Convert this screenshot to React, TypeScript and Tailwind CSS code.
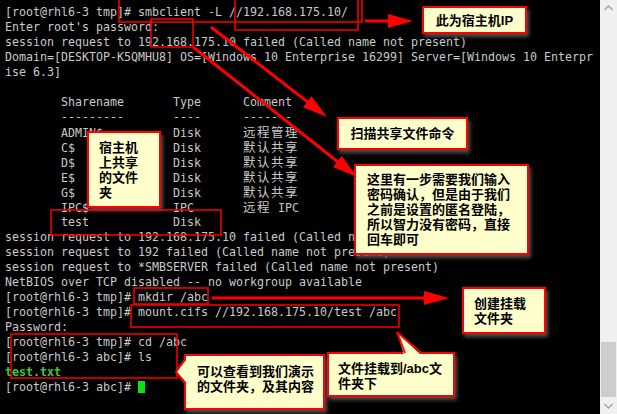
import React from "react";

const mono = { fontFamily: '"DejaVu Sans Mono", "Noto Sans CJK SC", monospace' };

function Cjk({ children }: { children: React.ReactNode }) {
  return <span className="text-[12.5px] tracking-[1.5px]">{children}</span>;
}

const lines: React.ReactNode[] = [
  "[root@rhl6-3 tmp]# smbclient -L //192.168.175.10/",
  "Enter root's password:",
  "session request to 192.168.175.10 failed (Called name not present)",
  "Domain=[DESKTOP-K5QMHU8] OS=[Windows 10 Enterprise 16299] Server=[Windows 10 Enterpr",
  "ise 6.3]",
  "",
  "        Sharename       Type      Comment",
  "        ---------       ----      -------",
  <>{"        ADMIN$          Disk      "}<Cjk>远程管理</Cjk></>,
  <>{"        C$              Disk      "}<Cjk>默认共享</Cjk></>,
  <>{"        D$              Disk      "}<Cjk>默认共享</Cjk></>,
  <>{"        E$              Disk      "}<Cjk>默认共享</Cjk></>,
  <>{"        G$              Disk      "}<Cjk>默认共享</Cjk></>,
  <>{"        IPC$            IPC       "}<Cjk>远程</Cjk>{" IPC"}</>,
  "        test            Disk",
  "session request to 192.168.175.10 failed (Called name not present)",
  "session request to 192 failed (Called name not present)",
  "session request to *SMBSERVER failed (Called name not present)",
  "NetBIOS over TCP disabled -- no workgroup available",
  "[root@rhl6-3 tmp]# mkdir /abc",
  "[root@rhl6-3 tmp]# mount.cifs //192.168.175.10/test /abc",
  "Password:",
  "[root@rhl6-3 tmp]# cd /abc",
  "[root@rhl6-3 abc]# ls",
  <span className="font-bold text-[#3ec43e]">test.txt</span>,
  <>
    {"[root@rhl6-3 abc]# "}
    <span className="inline-block w-[7px] h-[12px] bg-[#10e010] align-[-2px]" />
  </>,
];

// red boxes drawn on the screenshot
const boxes = [
  { x: 119, y: -1, w: 243, h: 23 },
  { x: 235, y: -1, w: 123, h: 31 },
  { x: 151, y: 19, w: 42, h: 28 },
  { x: 51, y: 210, w: 170, h: 25 },
  { x: 134, y: 288, w: 74, h: 16 },
  { x: 131, y: 305, w: 268, h: 22 },
  { x: 11, y: 334, w: 166, h: 44 },
];

const arrows = [
  [365, 21, 413, 21],
  [211, 27, 327, 117],
  [193, 47, 357, 177],
  [212, 298, 449, 298],
];

function Arrow({ a }: { a: number[] }) {
  const [x1, y1, x2, y2] = a;
  const dx = x2 - x1;
  const dy = y2 - y1;
  const len = Math.hypot(dx, dy);
  const ux = dx / len;
  const uy = dy / len;
  const hl = 25;
  const hw = 7;
  const bx = x2 - ux * hl;
  const by = y2 - uy * hl;
  const pts = `${x2},${y2} ${bx - uy * hw},${by + ux * hw} ${bx + uy * hw},${by - ux * hw}`;
  return (
    <g>
      <line x1={x1} y1={y1} x2={bx + ux * 2} y2={by + uy * 2} stroke="#ff0000" strokeWidth={3} />
      <polygon points={pts} fill="#ff0000" />
    </g>
  );
}

const callout =
  "absolute bg-[#ffffcc] border-2 border-[#ff0000] shadow-[2px_3px_4px_rgba(90,90,90,0.9)] text-black font-bold text-[13px] leading-[15px]";
const cFont = { fontFamily: '"Liberation Sans", "Noto Sans CJK SC", sans-serif' };

export default function App() {
  return (
    <div className="w-[617px] h-[414px] flex bg-black overflow-hidden">
      {/* TERMINAL */}
      <div className="relative w-[600px] h-[414px] overflow-hidden">
        <div className="pt-[5px] pl-[5px] text-[11.63px] text-[#c9c9c9]" style={mono}>
          {lines.map((l, i) => (
            <div key={i} className="h-[15px] leading-[15px] whitespace-pre">
              {l}
            </div>
          ))}
        </div>

        {/* CALLOUTS */}
        <div className={`${callout} left-[422px] top-[6px] w-[105px] h-[28px] flex items-center justify-center`} style={cFont}>
          此为宿主机IP
        </div>
        <div className={`${callout} left-[337px] top-[117px] w-[131px] h-[33px] flex items-center justify-center`} style={cFont}>
          扫描共享文件命令
        </div>
        <div className={`${callout} left-[354px] top-[164px] w-[175px] h-[91px] pl-[11px] pt-[6px]`} style={cFont}>
          这里有一步需要我们输入
          <br />
          密码确认，但是由于我们
          <br />
          之前是设置的匿名登陆，
          <br />
          所以智力没有密码，直接
          <br />
          回车即可
        </div>
        <div className={`${callout} left-[87px] top-[131px] w-[74px] h-[77px] pl-[10px] pt-[7px]`} style={cFont}>
          宿主机
          <br />
          上共享
          <br />
          的文件
          <br />夹
        </div>
        <div className={`${callout} left-[462px] top-[287px] w-[84px] h-[47px] pl-[10px] pt-[7px]`} style={cFont}>
          创建挂载
          <br />
          文件夹
        </div>
        <div className={`${callout} left-[327px] top-[352px] w-[128px] h-[45px] pl-[9px] pt-[7px]`} style={cFont}>
          文件挂载到/abc文
          <br />
          件夹下
        </div>
        <div className={`${callout} left-[184px] top-[354px] w-[141px] h-[56px] pl-[11px] pt-[8px] leading-[14px]`} style={cFont}>
          可以查看到我们演示
          <br />
          的文件夹，及其内容
        </div>

        {/* MARKUP */}
        <svg className="absolute left-0 top-0 pointer-events-none" width={600} height={414}>
          {boxes.map((b, i) => (
            <rect key={i} x={b.x} y={b.y} width={b.w} height={b.h} fill="none" stroke="#ff0000" strokeWidth={1.5} />
          ))}
          {arrows.map((a, i) => (
            <Arrow key={i} a={a} />
          ))}
          {/* callout pointers */}
          <polygon points="404,355 397,332 421,355" fill="#ffffcc" />
          <polyline points="405,353 397,332 421,353" fill="none" stroke="#ff0000" strokeWidth={2} />
          <polygon points="187,359 176,372 187,383" fill="#ffffcc" />
          <polyline points="185,359 176,372 185,383" fill="none" stroke="#ff0000" strokeWidth={2} />
        </svg>
      </div>

      {/* SCROLLBAR */}
      <div className="w-[17px] h-[414px] bg-[#f0f0f0] flex flex-col items-center">
        <svg width={17} height={17} viewBox="0 0 17 17">
          <path d="M4.5 10 L8.5 6 L12.5 10" stroke="#a3a3a3" strokeWidth={1.5} fill="none" />
        </svg>
        <div className="flex-1 w-full pt-[325px] pb-[0px] px-[1px] flex flex-col">
          <div className="h-[55px] bg-[#cdcdcd]" />
        </div>
        <svg width={17} height={17} viewBox="0 0 17 17">
          <path d="M4.5 7 L8.5 11 L12.5 7" stroke="#a3a3a3" strokeWidth={1.5} fill="none" />
        </svg>
      </div>
    </div>
  );
}
